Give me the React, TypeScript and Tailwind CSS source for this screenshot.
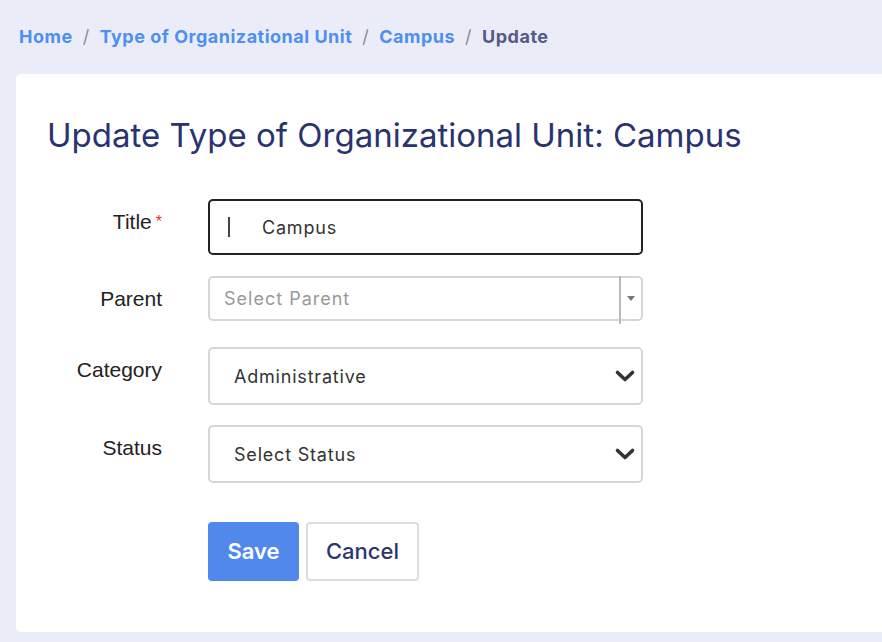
const labelCls = 'w-[115px] shrink-0 text-right text-[21px] leading-[24px] text-[#222] font-["Liberation_Sans",Arial,sans-serif] pt-[11px]';

function FieldRow({ label, required, children, className }: { label: string; required?: boolean; children: React.ReactNode; className?: string }) {
  return (
    <div className={'flex items-start ' + (className ?? '')}>
      <label className={labelCls}>
        {label}
        {required && <span className="text-[#e0342c] text-[16px] align-top ml-[4px]">*</span>}
      </label>
      <div className="ml-[46px] w-[435px]">{children}</div>
    </div>
  );
}

function NativeSelect({ value }: { value: string }) {
  return (
    <div className="h-[58px] rounded-[5px] border-2 border-[#d4d6d9] bg-white flex items-center justify-between pl-[24px] pr-[5px]">
      <span className="text-[18px] text-[#333] font-['Inter',sans-serif] tracking-[0.8px]">{value}</span>
      <svg width="22" height="14" viewBox="0 0 22 14">
        <path d="M3.5 3.5 L11 10.5 L18.5 3.5" fill="none" stroke="#333" strokeWidth="3.6" strokeLinecap="round" strokeLinejoin="round" />
      </svg>
    </div>
  );
}

export default function App() {
  return (
    <div className="min-h-[642px] bg-[#eaedf7] font-['Inter',sans-serif] pl-[16px] pb-[10px]">
      <nav className="h-[74px] flex items-center pb-[1px] text-[18px] font-bold pl-[3px] tracking-[0.5px]">
        <a className="text-[#4f8ff0]">Home</a>
        <span className="text-[#8a8d96] mx-[10px] font-normal">/</span>
        <a className="text-[#4f8ff0]">Type of Organizational Unit</a>
        <span className="text-[#8a8d96] mx-[10px] font-normal">/</span>
        <a className="text-[#4f8ff0]">Campus</a>
        <span className="text-[#8a8d96] mx-[10px] font-normal">/</span>
        <span className="text-[#555a8a]">Update</span>
      </nav>

      <div className="bg-white rounded-tl-[5px] rounded-bl-[5px] h-[558px] pl-[31px] pt-[40px]">
        <h1 className="text-[33px] leading-[42px] text-[#2a3370] font-normal">
          Update Type of Organizational Unit: Campus
        </h1>

        <div className="mt-[43px]">
          <FieldRow label="Title" required>
            <div className="h-[56px] rounded-[5px] border-2 border-[#222] flex items-center pl-[18px]">
              <span className="w-[2px] h-[20px] bg-[#444]" />
              <span className="ml-[32px] text-[18px] text-[#333] tracking-[0.8px]">Campus</span>
            </div>
          </FieldRow>

          <FieldRow label="Parent" className="mt-[21px]">
            <div className="relative h-[45px] rounded-[5px] border-2 border-[#d4d6d9] flex items-center pl-[14px]">
              <span className="text-[18px] text-[#999] tracking-[1px]">Select Parent</span>
              <span className="absolute left-[409px] top-[-2px] h-[48px] w-[2px] bg-[#b7b9bc]" />
              <span className="absolute right-[6px] top-[18px] w-0 h-0 border-l-[4px] border-r-[4px] border-t-[5px] border-l-transparent border-r-transparent border-t-[#777]" />
            </div>
          </FieldRow>

          <FieldRow label="Category" className="mt-[26px]">
            <NativeSelect value="Administrative" />
          </FieldRow>

          <FieldRow label="Status" className="mt-[20px]">
            <NativeSelect value="Select Status" />
          </FieldRow>

          <div className="flex gap-[7px] ml-[161px] mt-[39px]">
            <button className="h-[59px] w-[91px] rounded-[4px] bg-[#5088ec] text-white text-[22px] font-semibold">
              Save
            </button>
            <button className="h-[59px] w-[113px] rounded-[4px] border-2 border-[#dddddd] bg-white text-[#2c3570] text-[22px] font-medium">
              Cancel
            </button>
          </div>
        </div>
      </div>
    </div>
  );
}
